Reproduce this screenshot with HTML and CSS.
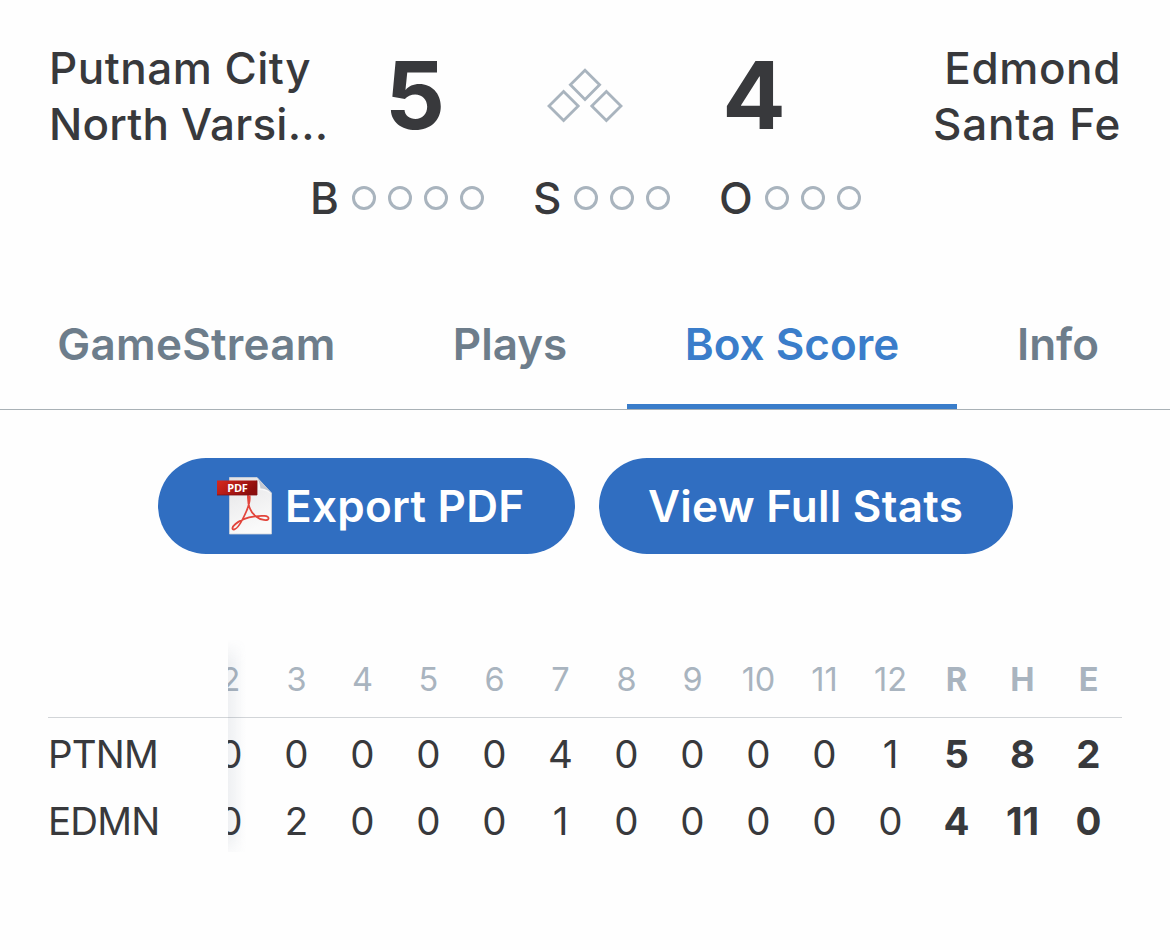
FILE: index.html
```html
<!DOCTYPE html>
<html lang="en">

<head>
	<meta charset="utf-8">
	<title>Box Score</title>
	<link rel="stylesheet" href="styles.css">
</head>

<body>
	<header class="scoreboard">
		<div class="teams">
			<div class="team away"><span class="putnam">Putnam City</span><br><span class="north">North Varsi...</span></div>
			<div class="score">5</div>
			<svg class="bases" width="78" height="58" viewBox="0 0 78 58" fill="none" stroke="#a9b4be" stroke-width="2.8">
				<path d="M39 3.2L53.6 17.8L39 32.4L24.4 17.8Z" />
				<path d="M17.6 24.4L32.2 39L17.6 53.6L3 39Z" />
				<path d="M60.4 24.4L75 39L60.4 53.6L45.8 39Z" />
			</svg>
			<div class="score">4</div>
			<div class="team home"><span class="edmond">Edmond</span><br><span class="santa">Santa Fe</span></div>
		</div>
		<div class="counts">
			<div class="count balls"><b>B</b><i></i><i></i><i></i><i></i></div>
			<div class="count strikes"><b>S</b><i></i><i></i><i></i></div>
			<div class="count outs"><b>O</b><i></i><i></i><i></i></div>
		</div>
	</header>

	<nav class="tabs">
		<a class="tab stream">GameStream</a>
		<a class="tab">Plays</a>
		<a class="tab active">Box Score</a>
		<a class="tab info">Info</a>
	</nav>

	<div class="buttons">
		<a class="btn export">
			<svg class="pdf" width="56" height="58" viewBox="0 0 56 58">
				<defs>
					<linearGradient id="paper" x1="0" y1="0" x2="0.3" y2="1">
						<stop offset="0" stop-color="#e2e2e3" />
						<stop offset="0.45" stop-color="#eeeeef" />
						<stop offset="1" stop-color="#fafafa" />
					</linearGradient>
					<linearGradient id="banner" x1="0" y1="0" x2="1" y2="0.4">
						<stop offset="0" stop-color="#d8291f" />
						<stop offset="1" stop-color="#8c0d0c" />
					</linearGradient>
				</defs>
				<path d="M12.5 .5H40L54.5 16V57H12.5Z" fill="url(#paper)" stroke="#cfd3da" stroke-width=".8" />
				<path d="M40 .5C41.5 5 41.5 9 40.5 13C45 12.5 50 13.5 54.5 17Z" fill="#f8f8f9" />
				<path d="M40 .5L54.5 16C50 12.5 47 11.500 43.500 11.500C43 7.500 42 4 40 .5Z" fill="#c4c9d2" />
				<path d="M31 18C30.5 27 33 35 39 39.5C44 43.5 51 44 51.5 41.5C52 38.5 45 38.5 38 39.3C30 40.3 23 43 18.500 47C15 50 14.500 52.500 17 52.500C21 52 26 42 29.500 34C32 28 33.500 23 32.500 18.500" fill="none" stroke="#e2453c" stroke-width="1.8" />
				<rect x="0" y="3.5" width="40" height="14.5" fill="url(#banner)" />
				<path d="M0 18H40V3.5" fill="none" stroke="#7d1014" stroke-width=".8" />
				<text x="10.3" y="15" class="pdf-label">PDF</text>
			</svg>
			<span>Export PDF</span>
		</a>
		<a class="btn stats"><span>View Full Stats</span></a>
	</div>

	<section class="linescore">
		<div class="names">
			<div class="head"></div>
			<div class="row">PTNM</div>
			<div class="row">EDMN</div>
		</div>
		<div class="scroller">
			<div class="innings head">
				<span>2</span><span>3</span><span>4</span><span>5</span><span>6</span><span>7</span><span>8</span><span>9</span><span>10</span><span>11</span><span>12</span><b>R</b><b>H</b><b>E</b>
			</div>
			<div class="innings row">
				<span>0</span><span>0</span><span>0</span><span>0</span><span>0</span><span>4</span><span>0</span><span>0</span><span>0</span><span>0</span><span>1</span><b>5</b><b>8</b><b>2</b>
			</div>
			<div class="innings row">
				<span>0</span><span>2</span><span>0</span><span>0</span><span>0</span><span>1</span><span>0</span><span>0</span><span>0</span><span>0</span><span>0</span><b>4</b><b>11</b><b>0</b>
			</div>
		</div>
	</section>
</body>

</html>
```

FILE: styles.css
```css
* {
	box-sizing: border-box;
}

body {
	margin: 0;
	background-color: #fefefe;
	color: #38393c;
	font-family: Inter, "Liberation Sans", sans-serif;
}

.scoreboard {
	height: 300px;
	padding: 40px 49px 0 49px;
}

.teams {
	display: grid;
	grid-template-columns: 298px 136px 204px 134px 300px;
	height: 113px;
	align-items: start;
}

.team {
	font-size: 44px;
	font-weight: 500;
	line-height: 56px;
	white-space: nowrap;
}

.putnam {
	letter-spacing: 0.5px;
}

.north {
	letter-spacing: 0.2px;
}

.edmond {
	letter-spacing: 0.6px;
}

.santa {
	letter-spacing: 0.75px;
}

.home {
	text-align: right;
}

.score {
	font-size: 94px;
	font-weight: 700;
	line-height: 111px;
	text-align: center;
}

.bases {
	justify-self: center;
	margin-top: 27px;
}

.counts {
	display: flex;
	padding: 17px 0 0 261px;
}

.count {
	display: flex;
	align-items: center;
	height: 56px;
}

.count b {
	font-size: 44px;
	font-weight: 500;
	line-height: 56px;
}

.balls b {
	width: 42px;
}

.strikes {
	margin-left: 49px;
}

.strikes b {
	width: 41px;
}

.outs {
	margin-left: 49px;
}

.outs b {
	width: 46px;
}

.count i {
	width: 24px;
	height: 24px;
	border: 3px solid #a9b4be;
	border-radius: 50%;
}

.count i + i {
	margin-left: 12px;
}

.tabs {
	display: grid;
	grid-template-columns: 393px 234px 330px 202px;
	height: 110px;
	border-bottom: 1px solid #a9b1b6;
}

.tab {
	padding-top: 16px;
	color: #6d7d8b;
	font-size: 44px;
	font-weight: 600;
	line-height: 56px;
	text-align: center;
}

.stream {
	letter-spacing: 0.25px;
}

.active {
	color: #3a7dca;
	border-bottom: 5px solid #3a7dca;
}

.buttons {
	display: flex;
	gap: 24px;
	padding: 48px 0 0 158px;
}

.btn {
	display: flex;
	height: 96px;
	border-radius: 48px;
	background-color: #306ec1;
	color: #fff;
	font-size: 44px;
	font-weight: 600;
	line-height: 96px;
	letter-spacing: 0.25px;
	white-space: nowrap;
}

.export {
	width: 417px;
	padding-left: 59px;
}

.stats {
	width: 414px;
	padding-left: 49px;
}

.pdf {
	margin: 19px 12px 0 0;
}

.pdf-label {
	fill: #fff;
	font: 700 11px "Open Sans", "Noto Sans", sans-serif;
	letter-spacing: -0.3px;
}

.linescore {
	display: flex;
	margin: 97px 48px 0;
}

.names {
	position: relative;
	z-index: 1;
	width: 180px;
	background-color: #fefefe;
	letter-spacing: -0.8px;
}

/* shadow of the frozen column over the scrolled innings */
.names::after {
	content: "";
	position: absolute;
	top: -12px;
	bottom: -8px;
	left: 100%;
	width: 18px;
	background: linear-gradient(to right, rgba(70, 90, 120, 0.08), rgba(70, 90, 120, 0.05) 40%, rgba(70, 90, 120, 0));
	-webkit-mask-image: linear-gradient(transparent, #000 24px, #000 calc(100% - 24px), transparent);
	mask-image: linear-gradient(transparent, #000 24px, #000 calc(100% - 24px), transparent);
}

.scroller {
	display: flex;
	flex-direction: column;
	align-items: flex-end;
	width: 894px;
	overflow: hidden;
}

.head {
	height: 67px;
	border-bottom: 1px solid #d2d5d8;
}

.row {
	height: 67px;
	font-size: 38.5px;
	line-height: 73px;
}

.innings {
	display: grid;
	grid-template-columns: repeat(14, 66px);
	padding-right: 0.5px;
	text-align: center;
}

.innings.head {
	color: #a9b4bf;
	font-size: 32.5px;
	line-height: 58px;
}

.innings b {
	font-weight: 700;
}
```
